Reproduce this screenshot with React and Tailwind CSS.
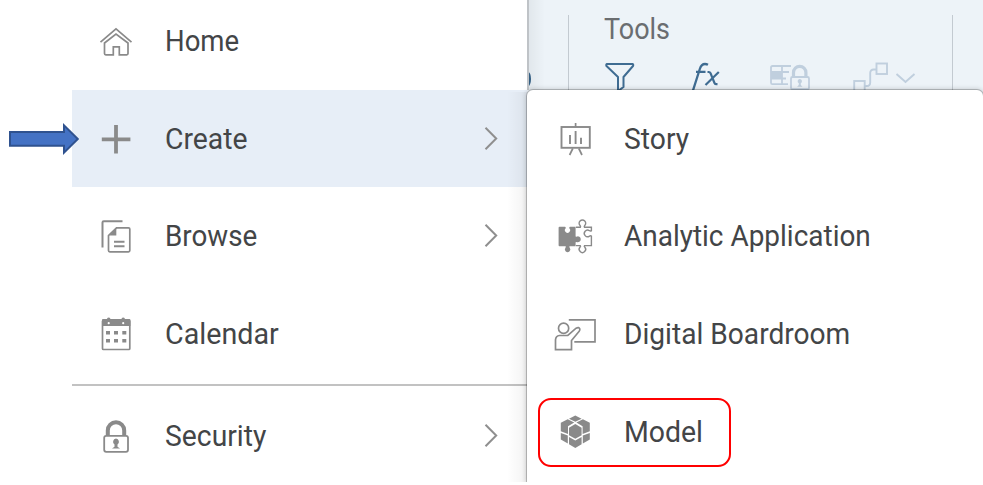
import React from "react";

const FONT = "font-['Roboto','Liberation_Sans',sans-serif]";

function Icon({ children, className = "text-[#8a8a8a]" }) {
  return (
    <svg
      width="44"
      height="44"
      viewBox="0 0 44 44"
      fill="none"
      stroke="currentColor"
      strokeWidth="1.7"
      className={`shrink-0 ${className}`}
    >
      {children}
    </svg>
  );
}

const HomeIcon = () => (
  <Icon>
    <path d="M6.5 23.2 22 9.8l15.5 13.4" />
    <path d="M10.5 24 22 15l12 9v10.5q0 1.3-1.3 1.3h-7.4v-8h-6v8h-7.5q-1.3 0-1.3-1.3Z" />
  </Icon>
);

const PlusIcon = () => (
  <Icon>
    <path d="M7.8 22.3h28.600M22 8v28.600" strokeWidth="3.800" />
  </Icon>
);

const BrowseIcon = () => (
  <Icon>
    <path d="M28.5 7.3H9.8q-1.3 0-1.3 1.3v24.8" strokeWidth="2" />
    <path d="M22.5 13.8h12q1.3 0 1.3 1.3v21.4q0 1.3-1.3 1.3H15.8q-1.3 0-1.3-1.3V21.5Z" />
    <path d="M15 21.5h7.3v-7.5Z" fill="currentColor" stroke="none" />
    <path d="M20 27.8h10.5M20 32.3h10.5" strokeWidth="2" />
  </Icon>
);

const CalendarIcon = () => (
  <Icon>
    <rect x="8.5" y="8.3" width="27.3" height="29.2" rx="1" strokeWidth="1.7" />
    <path
      d="M8 8q0-1 1-1h4.2V6q1.5-1 3 0v1h11.5V6q1.5-1 3 0v1h4.7q1 0 1 1v6H8Z"
      fill="currentColor"
      stroke="none"
    />
    <circle cx="14.7" cy="11.200" r="1.100" fill="white" stroke="none" />
    <circle cx="29.2" cy="11.200" r="1.100" fill="white" stroke="none" />
    <path d="M12 20.7h4M20 20.7h4M28.3 20.7h4M12 28.7h4M20 28.7h4M28.3 28.7h4" strokeWidth="3.5" />
  </Icon>
);

const LockIcon = () => (
  <Icon>
    <path d="M13.800 21.500v-5a8.200 8.200 0 0 1 16.400 0v5" strokeWidth="4" />
    <rect x="10.2" y="21.8" width="23.8" height="16" rx="2" strokeWidth="1.8" fill="white" />
    <path d="M22 24.500a3.300 3.300 0 0 1 1.500 6v2.200l2.500 1.800h-8l2.500-1.800v-2.200a3.300 3.300 0 0 1 1.500-6Z" fill="currentColor" stroke="none" />
  </Icon>
);

const StoryIcon = () => (
  <Icon>
    <rect x="8.5" y="10" width="28.3" height="20.8" strokeWidth="1.9" />
    <path d="M22.6 6v4M19.8 31.500l-3.200 6.500M25.800 31.500l3.200 6.500" />
    <path d="M17 18v9M22.6 14v13M28 20.8v6.2" strokeWidth="1.9" />
  </Icon>
);

const PuzzleIcon = () => (
  <Icon>
    <path
      d="M6.500 12.800h5.500q1 .2.700 1.500a2.600 2.600 0 1 0 3.600 0q-.3-1.300.7-1.500h5.600v9.700l1 .2a2.900 2.900 0 1 1 0 5.200l-1 .3v4h-6q-.7.700.2 1.600a2.700 2.700 0 1 1-4.400 0q.9-.9.200-1.600H6.500q-.9 0-.9-.9V13.700q0-.9.900-.9Z"
      fill="currentColor"
      stroke="none"
    />
    <path
      d="M23 13.300h4.300q.6-.9-.2-1.700a3.300 3.300 0 1 1 4.600 0q-.8.800-.2 1.700h6.900v3.400q-.8.700-1.900 0a3.300 3.300 0 1 0 0 5.400q1.100-.7 1.900 0v9.500h-6.900q-.6.700.2 1.500a3.200 3.200 0 1 1-4.600 0q.8-.8.200-1.500H23"
      strokeWidth="1.400"
    />
  </Icon>
);

const BoardroomIcon = () => (
  <Icon>
    <path d="M15.8 7.8H42v22H21.3" />
    <circle cx="10.6" cy="16.3" r="5.1" />
    <path d="M2.5 37.6V27.8q.3-3.8 4-4.3h8.3l8.3-7.3q3-1.500 3.700.8.200 1.300-.6 2.200l-7.700 9.300v9.100Z" />
  </Icon>
);

const ModelIcon = () => (
  <Icon>
    <g fill="currentColor" stroke="none">
      <path d="M22.300 5.500l6.300 3.200-6.300 3.100L16 8.700Z" />
      <path d="M14.700 9.300l6.500 3.300-6.200 3.700v7.700L7.800 21.300V12.800Z" />
      <path d="M29.900 9.300l-6.500 3.300 6.200 3.700v7.700l7.200-2.700V12.800Z" />
      <path d="M22.300 14l6.300 3.700v7.500l-6.300 3.600-6.300-3.600v-7.500Z" />
      <path d="M7.800 22.900l7 2.700v7.900l-7-3.900Z" />
      <path d="M36.800 22.900l-7 2.700v7.900l7-3.900Z" />
      <path d="M16 27l6.300 3.500 6.300-3.500v7.300l-6.300 3.600-6.300-3.600Z" />
    </g>
  </Icon>
);

function Chevron() {
  return (
    <svg width="14" height="24" viewBox="0 0 14 24" fill="none" className="mr-[29px] ml-auto shrink-0">
      <path d="M1.500 .8l10.700 10.700L1.500 22.200" stroke="#8f8f8f" strokeWidth="2" />
    </svg>
  );
}

function Label({ children, className }) {
  return (
    <span className={`inline-block origin-left whitespace-nowrap text-[29px] leading-[34px] text-[#434547] ${className}`}>
      {children}
    </span>
  );
}

const mainItems = [
  { label: "Home", icon: HomeIcon, row: "h-[98px]", text: "scale-x-[0.95]" },
  { label: "Create", icon: PlusIcon, row: "h-[97px] bg-[#e7eef7]", text: "scale-x-[0.978]", arrow: true, chevron: true },
  { label: "Browse", icon: BrowseIcon, row: "h-[98px]", text: "scale-x-[0.958]", chevron: true },
  { label: "Calendar", icon: CalendarIcon, row: "h-[98px]", text: "scale-x-[0.988]" },
];

const subItems = [
  { label: "Story", icon: StoryIcon, text: "scale-x-[0.975]" },
  { label: "Analytic Application", icon: PuzzleIcon, text: "scale-x-[0.964]" },
  { label: "Digital Boardroom", icon: BoardroomIcon, text: "scale-x-[0.97]" },
  { label: "Model", icon: ModelIcon, text: "scale-x-[0.98]", outlined: true },
];

function PointerArrow() {
  return (
    <svg width="74" height="36" viewBox="0 0 74 36" className="absolute top-[31px] -left-[65px]">
      <path
        d="M3 11h54V4.300L70.800 18 57 31.700v-7H3Z"
        fill="#4472c4"
        stroke="#2f528f"
        strokeWidth="2"
      />
    </svg>
  );
}

function MainRow({ item }) {
  const ItemIcon = item.icon;
  return (
    <li className={`relative flex shrink-0 items-center gap-[27px] pl-[22px] ${item.row}`}>
      {item.arrow && <PointerArrow />}
      <ItemIcon />
      <Label className={item.text}>{item.label}</Label>
      {item.chevron && <Chevron />}
    </li>
  );
}

function Toolbar() {
  return (
    <div className="flex h-[90px] overflow-hidden">
      <div className="flex w-[41px] shrink-0 items-end">
        <svg width="8" height="24" viewBox="0 0 8 24" fill="none">
          <path d="M-1 4.500Q3 7 3 13t-4 9" stroke="#346187" strokeWidth="2" />
        </svg>
      </div>
      <div className="mt-[15px] flex w-[385px] shrink-0 flex-col border-x border-[#c3cad1] pl-[35px]">
        <span className="-mt-[3px] inline-block origin-left scale-x-[0.93] text-[29px] leading-[34px] text-[#6a6d70]">
          Tools
        </span>
        <div className="mt-[14px] flex h-[30px]">
          <svg width="32" height="30" viewBox="0 0 32 30" fill="none" className="shrink-0">
            <path
              d="M3 4h25.500q1.200.5.500 2l-9.500 11v10l-5.500 4V17L2.500 6q-.7-1.500.5-2Z"
              stroke="#3f6c92"
              strokeWidth="2"
              strokeLinejoin="round"
            />
          </svg>
          <svg width="32" height="30" viewBox="0 0 32 30" fill="none" className="ml-[54px] shrink-0">
            <path
              d="M2.500 32 9.800 9q1.600-5 5.200-5 1.500 0 3 .8M6 11.800h9.500"
              stroke="#3f6c92"
              strokeWidth="2.300"
            />
            <path d="M17.500 12h1.200q1.300 0 1.800 1.200l4 9.800q.5 1.200 2 1.200h1M28.800 12 15.500 25" stroke="#3f6c92" strokeWidth="2.200" />
          </svg>
          <svg width="42" height="30" viewBox="0 0 42 30" fill="none" stroke="#c0cfde" strokeWidth="1.8" className="ml-[47px] shrink-0">
            <path d="M22 6H3.500Q2 6 2 7.500v15.200q0 1.500 1.500 1.500H19M2 12h18M2 18.500h15M13 6v18" />
            <path d="M2 12.500h11v6H2Z" fill="#c0cfde" stroke="none" />
            <path d="M24.500 17v-4.500a6.200 6.200 0 0 1 12.400 0V17" strokeWidth="3.200" />
            <rect x="22" y="17" width="18" height="12.200" rx="1.500" fill="#edf3f8" />
            <path d="M30.800 19a2.300 2.300 0 0 1 1 4.300v1.700l1.700 1.700h-5.400l1.700-1.700v-1.700a2.300 2.300 0 0 1 1-4.300Z" fill="#c0cfde" stroke="none" />
          </svg>
          <svg width="64" height="30" viewBox="0 0 64 30" fill="none" stroke="#c0cfde" strokeWidth="1.900" className="ml-[41px] shrink-0">
            <rect x="24.500" y="3.500" width="10.500" height="10.500" />
            <rect x="2.200" y="21" width="10.500" height="12" />
            <path d="M12.700 26h2q3.500 0 3.500-3.500v-9.500q0-3.500 3.500-3.500h2.800M44.500 14l9 8 9-8" />
          </svg>
        </div>
      </div>
    </div>
  );
}

export default function App() {
  return (
    <div className={`h-[485px] w-[983px] overflow-hidden bg-white ${FONT}`}>
      <div className="flex h-[482px] pl-[72px]">
        <nav className="relative z-10 flex w-[455px] shrink-0 flex-col">
          <ul className="-mt-[8px] flex flex-col bg-white">
            {mainItems.map((item) => (
              <MainRow key={item.label} item={item} />
            ))}
          </ul>
          <div className="mt-[1px] h-[2px] shrink-0 bg-[#c2c2c2]" />
          <ul className="flex flex-col bg-white">
            <MainRow item={{ label: "Security", icon: LockIcon, row: "h-[96px] pt-[4px]", text: "scale-x-[0.976]", chevron: true }} />
          </ul>
          <div className="pointer-events-none absolute top-[92px] right-0 h-[390px] w-[20px] bg-gradient-to-r from-transparent to-black/5" />
        </nav>
        <div className="relative z-20 flex h-[482px] w-[456px] flex-col bg-[#edf3f8] [clip-path:inset(0_0_0_-10px)]">
          <div className="pointer-events-none absolute top-0 left-0 h-[90px] w-[18px] border-l-2 border-[#bfc3c7] bg-gradient-to-r from-black/5 to-transparent" />
          <Toolbar />
          <ul className="relative flex h-[392px] flex-col rounded-t-[6px] bg-white shadow-[0_0_0_1px_rgba(0,0,0,0.2),0_0_5px_1px_rgba(0,0,0,0.18)]">
            {subItems.map((item) => {
              const ItemIcon = item.icon;
              return (
                <li key={item.label} className="relative flex h-[97.6px] shrink-0 items-center gap-[27px] pl-[26px]">
                  <ItemIcon />
                  <Label className={item.text}>{item.label}</Label>
                  {item.outlined && (
                    <span className="absolute top-[15px] left-[11px] h-[69px] w-[193px] rounded-[13px] border-2 border-[#ff0000]" />
                  )}
                </li>
              );
            })}
          </ul>
        </div>
      </div>
    </div>
  );
}
